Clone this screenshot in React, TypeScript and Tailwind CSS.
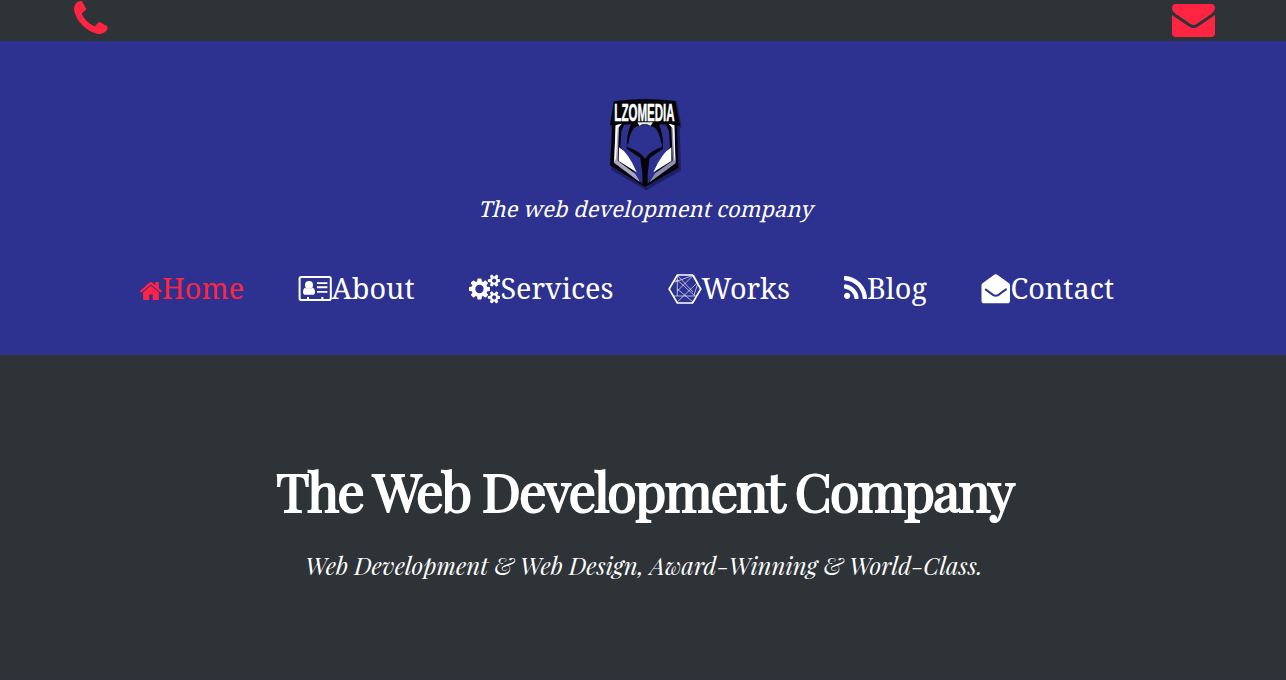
import type { ReactNode } from "react";

const PHONE =
  "M1408 1112q0 27-10 70.5t-21 68.5q-21 50-122 106-94 51-186 51-27 0-53-3.5t-57.5-12.5-47-14.5-55.5-20.5-49-18q-98-35-175-83-127-79-264-216t-216-264q-48-77-83-175-3-9-18-49t-20.5-55.5-14.5-47-12.5-57.5-3.5-53q0-92 51-186 56-101 106-122 25-11 68.5-21t70.5-10q14 0 21 3 18 6 53 76 11 19 30 54t35 63.5 31 53.5q3 4 17.5 25t21.5 35.5 7 28.5q0 20-28.5 50t-62 55-62 53-28.5 46q0 9 5 22.5t8.5 20.5 14 24 11.5 19q76 137 174 235t235 174q2 1 19 11.5t24 14 20.5 8.5 22.5 5q18 0 46-28.5t53-62 55-62 50-28.5q14 0 28.5 7t35.5 21.5 25 17.5q25 15 53.5 31t63.5 35 54 30q70 35 76 53 3 7 3 21z";
const ENVELOPE =
  "M1792 710v794q0 66-47 113t-113 47h-1472q-66 0-113-47t-47-113v-794q44 49 101 87 362 246 497 345 57 42 92.5 65.5t94.5 48 110 24.5h2q51 0 110-24.5t94.5-48 92.5-65.5q170-123 498-345 57-39 100-87zm0-294q0 79-49 151t-122 123q-376 261-468 325-10 7-42.5 31t-54 38.5-52 32.5-57.5 27-50 9h-2q-23 0-50-9t-57.5-27-52-32.5-54-38.5-42.5-31q-91-64-262-182.5t-205-142.5q-62-42-117-115.5t-55-136.5q0-78 41.5-130t118.5-52h1472q65 0 112.5 47t47.5 113z";
const HOME =
  "M1472 992v480q0 26-19 45t-45 19h-384v-384h-256v384h-384q-26 0-45-19t-19-45v-480q0-1 .5-3t.5-3l575-474 575 474q1 2 1 6zm223-69l-62 74q-8 9-21 11h-3q-13 0-21-7l-692-577-692 577q-12 8-24 7-13-2-21-11l-62-74q-8-10-7-23.5t11-21.5l719-599q32-26 76-26t76 26l244 204v-195q0-14 9-23t23-9h192q14 0 23 9t9 23v408l219 182q10 8 11 21.5t-7 23.5z";
const COGS =
  "M896 896q0-106-75-181t-181-75-181 75-75 181 75 181 181 75 181-75 75-181zm768 512q0-52-38-90t-90-38-90 38-38 90q0 53 37.5 90.5t90.5 37.5 90.5-37.5 37.5-90.5zm0-1024q0-52-38-90t-90-38-90 38-38 90q0 53 37.5 90.5t90.5 37.5 90.5-37.5 37.5-90.5zm-384 421v185q0 10-7 19.5t-16 10.5l-155 24q-11 35-32 76 34 48 90 115 7 11 7 20 0 12-7 19-23 30-82.5 89.5t-78.5 59.5q-11 0-21-7l-115-90q-37 19-77 31-11 108-23 155-7 24-30 24h-186q-11 0-20-7.5t-10-17.5l-23-153q-34-10-75-31l-118 89q-7 7-20 7-11 0-21-8-144-133-144-160 0-9 7-19 10-14 41-53t47-61q-23-44-35-82l-152-24q-10-1-17-9.5t-7-19.5v-185q0-10 7-19.5t16-10.5l155-24q11-35 32-76-34-48-90-115-7-11-7-20 0-12 7-20 22-30 82-89t79-59q11 0 21 7l115 90q34-18 77-32 11-108 23-154 7-24 30-24h186q11 0 20 7.5t10 17.5l23 153q34 10 75 31l118-89q8-7 20-7 11 0 21 8 144 133 144 160 0 8-7 19-12 16-42 54t-45 60q23 48 34 82l152 23q10 2 17 10.5t7 19.5zm640 533v140q0 16-149 31-12 27-30 52 51 113 51 138 0 4-4 7-122 71-124 71-8 0-46-47t-52-68q-20 2-30 2t-30-2q-14 21-52 68t-46 47q-2 0-124-71-4-3-4-7 0-25 51-138-18-25-30-52-149-15-149-31v-140q0-16 149-31 13-29 30-52-51-113-51-138 0-4 4-7 4-2 35-20t59-34 30-16q8 0 46 46.5t52 67.5q20-2 30-2t30 2q51-71 92-112l6-2q4 0 124 70 4 3 4 7 0 25-51 138 17 23 30 52 149 15 149 31zm0-1024v140q0 16-149 31-12 27-30 52 51 113 51 138 0 4-4 7-122 71-124 71-8 0-46-47t-52-68q-20 2-30 2t-30-2q-14 21-52 68t-46 47q-2 0-124-71-4-3-4-7 0-25 51-138-18-25-30-52-149-15-149-31v-140q0-16 149-31 13-29 30-52-51-113-51-138 0-4 4-7 4-2 35-20t59-34 30-16q8 0 46 46.5t52 67.5q20-2 30-2t30 2q51-71 92-112l6-2q4 0 124 70 4 3 4 7 0 25-51 138 17 23 30 52 149 15 149 31z";
const RSS =
  "M384 1344q0 80-56 136t-136 56-136-56-56-136 56-136 136-56 136 56 56 136zm512 123q2 28-17 48-18 21-47 21h-135q-25 0-43-16.5t-20-41.5q-22-229-184.5-391.5t-391.5-184.5q-25-2-41.5-20t-16.5-43v-135q0-29 21-47 17-17 43-17h5q160 13 306 80.5t259 181.5q114 113 181.5 259t80.5 306zm512 2q2 27-18 47-18 20-46 20h-143q-26 0-44.5-17.5t-19.5-42.5q-12-215-101-408.5t-231.5-336-336-231.5-408.5-102q-25-1-42.5-19.5t-17.5-43.5v-143q0-28 20-46 18-18 44-18h3q262 13 501.5 120t425.5 294q187 186 294 425.5t120 501.5z";

function CardIcon() {
  return (
    <svg className="mt-[16px] h-[25px] w-[33.5px] shrink-0" viewBox="0 0 33.5 25" fill="currentColor">
      <rect x="1.6" y="1" width="31.2" height="23" rx="1.8" fill="none" stroke="currentColor" strokeWidth="2" />
      <circle cx="11" cy="9" r="4" />
      <path d="M7.5 11.5C5.8 12 5 14 5 16.2c0 1.5.9 2.6 2.2 2.6h7.6c1.3 0 2.2-1.1 2.2-2.6 0-2.2-.8-4.2-2.5-4.7-2 2-5 2-7 0z" />
      <path d="M19 6.3h10.4v1.8H19zM19 10.3h10.4v2H19zM19 15h10.4v1.8H19zM9 21h2v3H9zM23.3 21h2v3h-2z" />
    </svg>
  );
}

function HexIcon() {
  return (
    <svg className="mt-[14px] h-[30px] w-[33.5px] shrink-0" viewBox="0 0 33.5 30" fill="none" stroke="currentColor">
      <path strokeWidth="1.7" d="M9.3 1h15.3l8.2 14-8.2 14H9.3L1.1 15z" />
      <path
        strokeWidth=".9"
        opacity=".7"
        d="M9.3 1v21M7 8 24.6 1.5M5 8.5 9.3 6 27 22M24.6 2 9.3 17M29 9 9.3 28M25.8 1 30 9 26 21M5 22h24M9.3 15 25 28M10 2l15 16"
      />
    </svg>
  );
}

function OpenEnvelopeIcon() {
  return (
    <svg className="mt-[14px] h-[30px] w-[29.5px] shrink-0" viewBox="0 0 30 30" preserveAspectRatio="none">
      <path
        fill="currentColor"
        d="M.5 11.5c0-1.2.5-1.8 1.4-2.5C5.5 6.2 9.5 3.7 12.4 1.4 13.4.6 14.2.2 15 .2s1.6.4 2.6 1.2C20.5 3.7 24.5 6.2 28.1 9c.9.7 1.4 1.3 1.4 2.5v15.2c0 1.6-1 2.6-2.6 2.6H3.1C1.5 29.3.5 28.3.5 26.7z"
      />
      <path fill="none" stroke="#2d318f" strokeWidth="2" strokeLinecap="round" d="M4.8 15.6c3 2 5.4 3.8 7.4 5.3 2.1 1.4 3.5 1.4 5.6 0 2-1.5 4.4-3.3 7.6-5.5" />
    </svg>
  );
}

function Logo() {
  return (
    <svg className="h-[110px] w-[110px] overflow-visible" viewBox="0 0 330 330">
      <path d="M70 34Q160 18 257 34L272 109 266 118 270 242 165 301 61 240 61 110 60 108z" fill="#171a55" opacity=".75" />
      <path d="M68 34Q160 22 253 33L267 107 258 109 262 233 162 291 57 226 64 107 57 105z" fill="#050509" />
      <path d="M74 106 92 101 84 112 80 212 142 258 146 276 69 218z" fill="#a9a9c6" />
      <path d="M250 106 233 101 241 112 245 212 180 258 177 276 254 220z" fill="#8c8db4" />
      <path d="M74 106 92 101 80 114 75 206 70 216zM250 106 233 101 245 114 250 206 253 216z" fill="#fff" />
      <path d="M99 104 120 103Q107 130 107 176L148 204 154 250 154 282Q130 256 108 202 100 184 88 170L91 124z" fill="#2d318f" />
      <path d="M225 104 204 103Q216 130 216 176L176 204 170 250 170 282Q194 256 215 202 223 184 237 170L234 124z" fill="#2d318f" />
      <path d="M84 172Q112 188 137 247L83 213zM241 172Q213 188 187 247L241 213z" fill="#fff" />
      <path d="M108 160Q112 106 160 105 210 106 214 160L212 171Q176 184 162 206 148 184 109 171z" fill="#2d318f" />
      <path d="M124 103 140 102Q116 122 112 162L108 160Q108 126 124 103zM199 103 183 102Q206 122 211 162L215 160Q215 126 199 103z" fill="#050509" />
      <path d="M139 97h47l-7 10-11-4h-14l-9 4z" fill="#e8eced" />
      <text x="70" y="93" fill="#fff" stroke="#fff" strokeWidth="1.5" fontFamily="Liberation Sans Narrow, Liberation Sans, sans-serif" fontWeight="700" fontSize="70" textLength="181" lengthAdjust="spacingAndGlyphs">LZOMEDIA</text>
    </svg>
  );
}

function NavItem({ icon, label, width, place, active }: { icon: ReactNode; label: string; width: string; place: string; active?: boolean }) {
  return (
    <a href="#" className={`flex h-[57px] items-start whitespace-nowrap ${place} ${active ? "text-[#ff2441]" : "text-white"}`}>
      {icon}
      <span className={`text-[28.8px] leading-[55px] ${width}`}>{label}</span>
    </a>
  );
}

export default function App() {
  return (
    <div className="flex h-[680px] w-full flex-col overflow-hidden bg-[#2e3337] text-white">
      <div className="flex h-[41px] shrink-0 items-start justify-between pr-[71px] pl-[74px] text-[#ff2441]">
        <svg className="mt-px h-[33px] w-[33.5px]" viewBox="0 0 1408 1408" preserveAspectRatio="none" fill="currentColor"><path d={PHONE} /></svg>
        <svg className="mt-[4px] h-[33px] w-[43px]" viewBox="0 256 1792 1408" preserveAspectRatio="none" fill="currentColor"><path d={ENVELOPE} /></svg>
      </div>
      <header className="flex h-[314px] shrink-0 flex-col items-center bg-[#2d318f] pt-[49px] font-['Noto_Serif','Droid_Serif','DejaVu_Serif',serif]">
        <div className="flex h-[104px] items-start pl-[5px]"><Logo /></div>
        <p className="ml-[8px] h-[30px] -skew-x-14 text-[22px] leading-[28px] whitespace-nowrap">The web development company</p>
        <nav className="mt-[36px] flex w-full pl-[140px]">
          <NavItem active label="Home" width="w-[81px]" place="w-[158px]" icon={<svg className="mt-[22px] h-[18px] w-[22px] shrink-0" viewBox="88 253 1616 1283" preserveAspectRatio="none" fill="currentColor"><path d={HOME} /></svg>} />
          <NavItem label="About" width="w-[82px]" place="w-[171px]" icon={<CardIcon />} />
          <NavItem label="Services" width="w-[113px]" place="w-[199px]" icon={<svg className="mt-[14px] h-[30px] w-[31.4px] shrink-0" viewBox="0 -10 1920 1812" fill="currentColor"><path d={COGS} /></svg>} />
          <NavItem label="Works" width="w-[88px]" place="w-[176px]" icon={<HexIcon />} />
          <NavItem label="Blog" width="w-[60px]" place="w-[137px]" icon={<svg className="mt-[16px] h-[23px] w-[23px] shrink-0" viewBox="0 128 1408 1408" fill="currentColor"><path d={RSS} /></svg>} />
          <NavItem label="Contact" width="w-[104px]" place="w-[134px]" icon={<OpenEnvelopeIcon />} />
        </nav>
      </header>
      <main className="flex grow flex-col items-center border-b border-[#35303a] pt-[97px] font-['Playfair_Display','Liberation_Serif',serif]">
        <h1 className="h-[76px] pl-[4px] text-[53.6px] leading-[76px] font-normal tracking-[-1.6px] whitespace-nowrap [-webkit-text-stroke:2px_white]">The Web Development Company</h1>
        <p className="mt-[21px] h-[32px] pl-[2px] text-[24px] leading-[32px] whitespace-nowrap italic">Web Development &amp; Web Design, Award-Winning &amp; World-Class.</p>
      </main>
    </div>
  );
}
